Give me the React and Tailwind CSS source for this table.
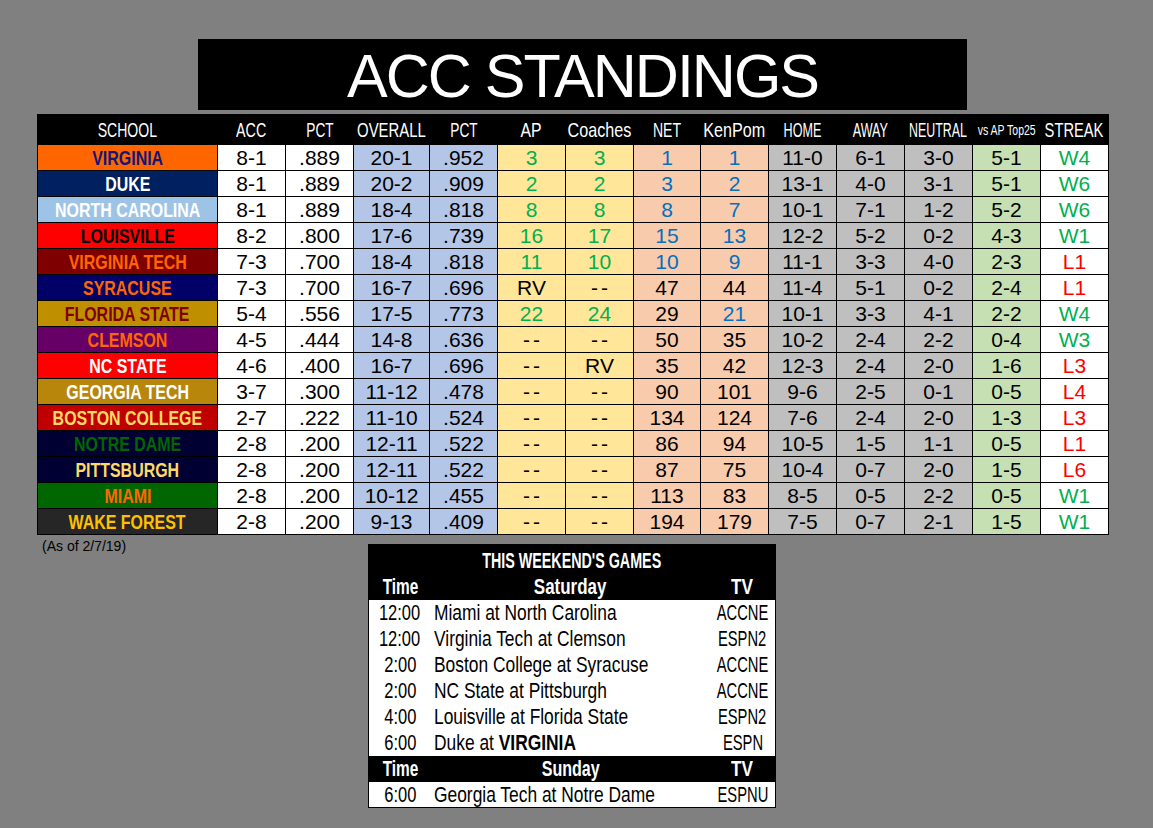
import React from "react";

const schools = [
  { name: "VIRGINIA", bg: "bg-[#FF6600]", fg: "text-[#14147a]", acc: "8-1", pct: ".889", ov: "20-1", opct: ".952", ap: "3", co: "3", net: "1", ken: "1", home: "11-0", away: "6-1", neu: "3-0", vs: "5-1", st: "W4" },
  { name: "DUKE", bg: "bg-[#002060]", fg: "text-white", acc: "8-1", pct: ".889", ov: "20-2", opct: ".909", ap: "2", co: "2", net: "3", ken: "2", home: "13-1", away: "4-0", neu: "3-1", vs: "5-1", st: "W6" },
  { name: "NORTH CAROLINA", bg: "bg-[#9DC3E6]", fg: "text-white", acc: "8-1", pct: ".889", ov: "18-4", opct: ".818", ap: "8", co: "8", net: "8", ken: "7", home: "10-1", away: "7-1", neu: "1-2", vs: "5-2", st: "W6" },
  { name: "LOUISVILLE", bg: "bg-[#FF0000]", fg: "text-black", acc: "8-2", pct: ".800", ov: "17-6", opct: ".739", ap: "16", co: "17", net: "15", ken: "13", home: "12-2", away: "5-2", neu: "0-2", vs: "4-3", st: "W1" },
  { name: "VIRGINIA TECH", bg: "bg-[#7F0000]", fg: "text-[#FF6600]", acc: "7-3", pct: ".700", ov: "18-4", opct: ".818", ap: "11", co: "10", net: "10", ken: "9", home: "11-1", away: "3-3", neu: "4-0", vs: "2-3", st: "L1" },
  { name: "SYRACUSE", bg: "bg-[#000066]", fg: "text-[#FF6600]", acc: "7-3", pct: ".700", ov: "16-7", opct: ".696", ap: "RV", co: "--", net: "47", ken: "44", home: "11-4", away: "5-1", neu: "0-2", vs: "2-4", st: "L1" },
  { name: "FLORIDA STATE", bg: "bg-[#BF8F00]", fg: "text-[#7F0000]", acc: "5-4", pct: ".556", ov: "17-5", opct: ".773", ap: "22", co: "24", net: "29", ken: "21", home: "10-1", away: "3-3", neu: "4-1", vs: "2-2", st: "W4" },
  { name: "CLEMSON", bg: "bg-[#660066]", fg: "text-[#FF6600]", acc: "4-5", pct: ".444", ov: "14-8", opct: ".636", ap: "--", co: "--", net: "50", ken: "35", home: "10-2", away: "2-4", neu: "2-2", vs: "0-4", st: "W3" },
  { name: "NC STATE", bg: "bg-[#FF0000]", fg: "text-white", acc: "4-6", pct: ".400", ov: "16-7", opct: ".696", ap: "--", co: "RV", net: "35", ken: "42", home: "12-3", away: "2-4", neu: "2-0", vs: "1-6", st: "L3" },
  { name: "GEORGIA TECH", bg: "bg-[#B8860B]", fg: "text-white", acc: "3-7", pct: ".300", ov: "11-12", opct: ".478", ap: "--", co: "--", net: "90", ken: "101", home: "9-6", away: "2-5", neu: "0-1", vs: "0-5", st: "L4" },
  { name: "BOSTON COLLEGE", bg: "bg-[#C00000]", fg: "text-[#FFD966]", acc: "2-7", pct: ".222", ov: "11-10", opct: ".524", ap: "--", co: "--", net: "134", ken: "124", home: "7-6", away: "2-4", neu: "2-0", vs: "1-3", st: "L3" },
  { name: "NOTRE DAME", bg: "bg-[#000033]", fg: "text-[#006600]", acc: "2-8", pct: ".200", ov: "12-11", opct: ".522", ap: "--", co: "--", net: "86", ken: "94", home: "10-5", away: "1-5", neu: "1-1", vs: "0-5", st: "L1" },
  { name: "PITTSBURGH", bg: "bg-[#000033]", fg: "text-[#FFD966]", acc: "2-8", pct: ".200", ov: "12-11", opct: ".522", ap: "--", co: "--", net: "87", ken: "75", home: "10-4", away: "0-7", neu: "2-0", vs: "1-5", st: "L6" },
  { name: "MIAMI", bg: "bg-[#006600]", fg: "text-[#FF6600]", acc: "2-8", pct: ".200", ov: "10-12", opct: ".455", ap: "--", co: "--", net: "113", ken: "83", home: "8-5", away: "0-5", neu: "2-2", vs: "0-5", st: "W1" },
  { name: "WAKE FOREST", bg: "bg-[#262626]", fg: "text-[#FFC000]", acc: "2-8", pct: ".200", ov: "9-13", opct: ".409", ap: "--", co: "--", net: "194", ken: "179", home: "7-5", away: "0-7", neu: "2-1", vs: "1-5", st: "W1" },
];

const headers = [
  { t: "SCHOOL", s: "scale-x-[0.67]" },
  { t: "ACC", s: "scale-x-[0.68]" },
  { t: "PCT", s: "scale-x-[0.65]" },
  { t: "OVERALL", s: "scale-x-[0.71]" },
  { t: "PCT", s: "scale-x-[0.65]" },
  { t: "AP", s: "scale-x-[0.75]" },
  { t: "Coaches", s: "scale-x-[0.77]" },
  { t: "NET", s: "scale-x-[0.67]" },
  { t: "KenPom", s: "scale-x-[0.77]" },
  { t: "HOME", s: "scale-x-[0.6]" },
  { t: "AWAY", s: "scale-x-[0.6]" },
  { t: "NEUTRAL", s: "scale-x-[0.59]" },
  { t: "vs AP Top25", s: "scale-x-[0.75]", small: true },
  { t: "STREAK", s: "scale-x-[0.7]" },
];

const saturday = [
  { time: "12:00", game: "Miami at North Carolina", tv: "ACCNE" },
  { time: "12:00", game: "Virginia Tech at Clemson", tv: "ESPN2" },
  { time: "2:00", game: "Boston College at Syracuse", tv: "ACCNE" },
  { time: "2:00", game: "NC State at Pittsburgh", tv: "ACCNE" },
  { time: "4:00", game: "Louisville at Florida State", tv: "ESPN2" },
  { time: "6:00", game: null, tv: "ESPN" },
];

const isNum = (v) => /^\d+$/.test(v);

function Data({ bg, color = "text-black", children }) {
  return (
    <div className={`flex items-center justify-center h-[25px] ${bg} ${color} text-[21px] leading-none`}>
      <span className={`whitespace-nowrap ${children === "--" ? "tracking-[3px] pl-[3px]" : ""}`}>{children}</span>
    </div>
  );
}

function GameRow({ time, game, tv, h = "h-[26px]" }) {
  return (
    <div className={`grid grid-cols-[62px_279px_65px] ${h} bg-white text-black text-[22px] leading-none items-center`}>
      <div className="flex justify-center">
        <span className="inline-block whitespace-nowrap scale-x-[0.75]">{time}</span>
      </div>
      <div className="pl-[3px] overflow-visible">
        <span className="inline-block whitespace-nowrap origin-left scale-x-[0.79]">{game}</span>
      </div>
      <div className="flex justify-center">
        <span className="inline-block whitespace-nowrap scale-x-[0.67]">{tv}</span>
      </div>
    </div>
  );
}

function DayHeader({ day, s }) {
  return (
    <div className="grid grid-cols-[62px_279px_65px] h-[26px] bg-black text-white text-[22px] font-bold leading-none items-center">
      <div className="flex justify-center">
        <span className="inline-block whitespace-nowrap scale-x-[0.7]">Time</span>
      </div>
      <div className="flex justify-center">
        <span className={`inline-block whitespace-nowrap ${s}`}>{day}</span>
      </div>
      <div className="flex justify-center">
        <span className="inline-block whitespace-nowrap scale-x-[0.78]">TV</span>
      </div>
    </div>
  );
}

export default function App() {
  return (
    <div className="w-[1153px] h-[828px] bg-[#808080] overflow-hidden font-['Liberation_Sans',Arial,sans-serif] flex flex-col">
      <div className="ml-[198px] mt-[39px] w-[769px] h-[71px] bg-black flex items-center justify-center pt-[4px]">
        <span className="text-white text-[61px] leading-none tracking-[-2px] whitespace-nowrap">ACC STANDINGS</span>
      </div>

      <div className="ml-[37px] mt-[4px] w-[1072px] bg-black px-px pb-px grid grid-cols-[179px_67px_67px_75px_67px_67px_67px_66px_67px_67px_67px_67px_67px_67px] gap-px">
        {headers.map((h, i) => (
          <div key={i} className={`h-[30px] flex justify-center text-white leading-none ${h.small ? "items-end pb-[7px] text-[14px]" : "items-center text-[21px]"}`}>
            <span className={`inline-block whitespace-nowrap ${h.s}`}>{h.t}</span>
          </div>
        ))}
        {schools.map((r) => (
          <React.Fragment key={r.name}>
            <div className={`flex items-center justify-center h-[25px] ${r.bg} ${r.fg} text-[21px] font-bold leading-none`}>
              <span className="inline-block whitespace-nowrap scale-x-[0.76]">{r.name}</span>
            </div>
            <Data bg="bg-white">{r.acc}</Data>
            <Data bg="bg-white">{r.pct}</Data>
            <Data bg="bg-[#B4C6E7]">{r.ov}</Data>
            <Data bg="bg-[#B4C6E7]">{r.opct}</Data>
            <Data bg="bg-[#FFE699]" color={isNum(r.ap) ? "text-[#00B050]" : "text-black"}>{r.ap}</Data>
            <Data bg="bg-[#FFE699]" color={isNum(r.co) ? "text-[#00B050]" : "text-black"}>{r.co}</Data>
            <Data bg="bg-[#F8CBAD]" color={Number(r.net) <= 25 ? "text-[#0070C0]" : "text-black"}>{r.net}</Data>
            <Data bg="bg-[#F8CBAD]" color={Number(r.ken) <= 25 ? "text-[#0070C0]" : "text-black"}>{r.ken}</Data>
            <Data bg="bg-[#BFBFBF]">{r.home}</Data>
            <Data bg="bg-[#BFBFBF]">{r.away}</Data>
            <Data bg="bg-[#BFBFBF]">{r.neu}</Data>
            <Data bg="bg-[#C6E0B4]">{r.vs}</Data>
            <Data bg="bg-white" color={r.st.startsWith("W") ? "text-[#00B050]" : "text-[#FF0000]"}>{r.st}</Data>
          </React.Fragment>
        ))}
      </div>

      <div className="ml-[37px] grid grid-cols-[331px_408px] items-start">
        <div className="pl-[5px] pt-[3px] text-[14px] leading-[16px] text-black whitespace-nowrap">(As of 2/7/19)</div>
        <div className="mt-[9px] w-[408px] border border-black bg-black flex flex-col">
          <div className="h-[29px] flex items-center justify-center pt-[3px] text-white text-[22px] font-bold leading-none">
            <span className="inline-block whitespace-nowrap scale-x-[0.65]">THIS WEEKEND'S GAMES</span>
          </div>
          <DayHeader day="Saturday" s="scale-x-[0.77]" />
          {saturday.map((g, i) =>
            g.game ? (
              <GameRow key={i} time={g.time} game={g.game} tv={g.tv} />
            ) : (
              <GameRow
                key={i}
                time={g.time}
                game={
                  <>
                    Duke at <span className="font-bold">VIRGINIA</span>
                  </>
                }
                tv={g.tv}
              />
            )
          )}
          <DayHeader day="Sunday" s="scale-x-[0.73]" />
          <GameRow time="6:00" game="Georgia Tech at Notre Dame" tv="ESPNU" h="h-[25px]" />
        </div>
      </div>
    </div>
  );
}
